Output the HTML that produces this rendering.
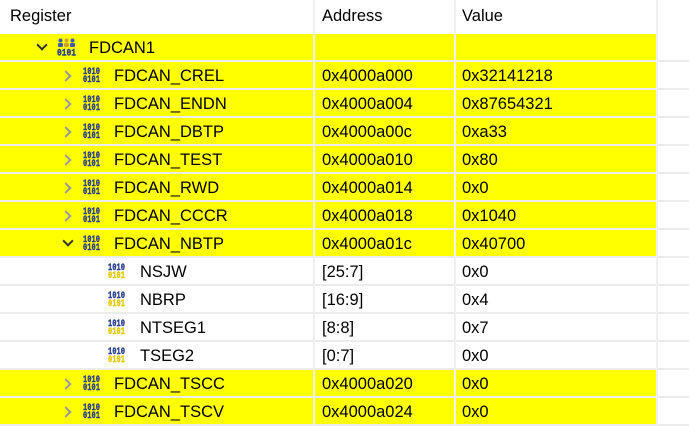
<!DOCTYPE html>
<html><head><meta charset="utf-8"><style>
body{margin:0;width:689px;height:422px;overflow:hidden;background:#fff;font-family:"Segoe UI","Liberation Sans",sans-serif;font-size:16.5px;color:#000;position:relative}
.r{position:absolute;left:0;width:689px;height:28px;}
.y{position:absolute;left:0;top:0;width:656px;height:26px;background:#ffff00}
.sep{position:absolute;left:0;top:26px;width:689px;height:2px;background:#ececec}
.v{position:absolute;top:0;width:2px;height:28px;background:#f0f0f0}
.t{position:absolute;top:4px;white-space:nowrap;line-height:20px}
.ic{position:absolute;top:4px}
.ch{position:absolute;top:10px;width:6px;height:6px;border-right:2px solid #999;border-bottom:2px solid #999;transform:rotate(-45deg)}
.cd{position:absolute;top:7px;width:6px;height:6px;border-right:2px solid #333;border-bottom:2px solid #333;transform:rotate(45deg)}
.h{position:absolute;top:0;left:0;width:689px;height:34px}
</style></head><body>
<div class="h">
<div class="t" style="left:10px;top:6px">Register</div>
<div class="t" style="left:322px;top:6px">Address</div>
<div class="t" style="left:462px;top:6px">Value</div>
<div class="v" style="left:313px;height:34px"></div>
<div class="v" style="left:454px;height:34px"></div>
<div class="v" style="left:656px;height:34px"></div>
</div>

<div class="r" style="top:34px"><div class="y"></div><div class="sep"></div><div class="v" style="left:313px"></div><div class="v" style="left:454px"></div><div class="v" style="left:656px"></div>
<div class="cd" style="left:38px"></div>
<svg style="position:absolute;left:57px;top:4px" width="19" height="18"><g fill="#3d5ba8"><circle cx="3.5" cy="2.5" r="2"/><rect x="1" y="5" width="5" height="4" rx="1"/><circle cx="15.5" cy="2.5" r="2"/><rect x="13" y="5" width="5" height="4" rx="1"/></g><g fill="#c9a227"><circle cx="9.5" cy="2.5" r="2"/><rect x="7" y="5" width="5" height="4" rx="1"/></g><text x="0" y="17.5" font-family="Liberation Mono" font-weight="bold" font-size="10" fill="#2b3f8f" stroke="#2b3f8f" stroke-width="0.4" textLength="19" lengthAdjust="spacingAndGlyphs">0101</text></svg>
<div class="t" style="left:89px">FDCAN1</div></div>

<div id="rows"></div>
<script>
var rows=[
[1,"FDCAN_CREL","0x4000a000","0x32141218",0],
[1,"FDCAN_ENDN","0x4000a004","0x87654321",0],
[1,"FDCAN_DBTP","0x4000a00c","0xa33",0],
[1,"FDCAN_TEST","0x4000a010","0x80",0],
[1,"FDCAN_RWD","0x4000a014","0x0",0],
[1,"FDCAN_CCCR","0x4000a018","0x1040",0],
[1,"FDCAN_NBTP","0x4000a01c","0x40700",1],
[2,"NSJW","[25:7]","0x0"],
[2,"NBRP","[16:9]","0x4"],
[2,"NTSEG1","[8:8]","0x7"],
[2,"TSEG2","[0:7]","0x0"],
[1,"FDCAN_TSCC","0x4000a020","0x0",0],
[1,"FDCAN_TSCV","0x4000a024","0x0",0]];
function icon(x,yl){var c2=yl?'#e0c800':'#2b3f8f';return '<svg class="ic" style="left:'+x+'px" width="17" height="17"><text x="0" y="8" font-family="Liberation Mono" font-weight="bold" font-size="10.5" fill="#2b3f8f" stroke="#2b3f8f" stroke-width="0.4" textLength="17" lengthAdjust="spacingAndGlyphs">1010</text><text x="0" y="16" font-family="Liberation Mono" font-weight="bold" font-size="10.5" fill="'+c2+'" stroke="'+c2+'" stroke-width="0.4" textLength="17" lengthAdjust="spacingAndGlyphs">0101</text></svg>';}
var h="";
rows.forEach(function(r,i){
var top=62+i*28;
h+='<div class="r" style="top:'+top+'px">';
if(r[0]==1)h+='<div class="y"></div>';
h+='<div class="sep"></div><div class="v" style="left:313px"></div><div class="v" style="left:454px"></div><div class="v" style="left:656px"></div>';
if(r[0]==1){
 h+=r[4]?'<div class="cd" style="left:64px"></div>':'<div class="ch" style="left:62px"></div>';
 h+=icon(83,0)+'<div class="t" style="left:114px">'+r[1]+'</div>';
}else{
 h+=icon(108,1)+'<div class="t" style="left:140px">'+r[1]+'</div>';
}
h+='<div class="t" style="left:322px">'+r[2]+'</div><div class="t" style="left:462px">'+r[3]+'</div></div>';
});
document.getElementById("rows").innerHTML=h;
</script>
</body></html>
